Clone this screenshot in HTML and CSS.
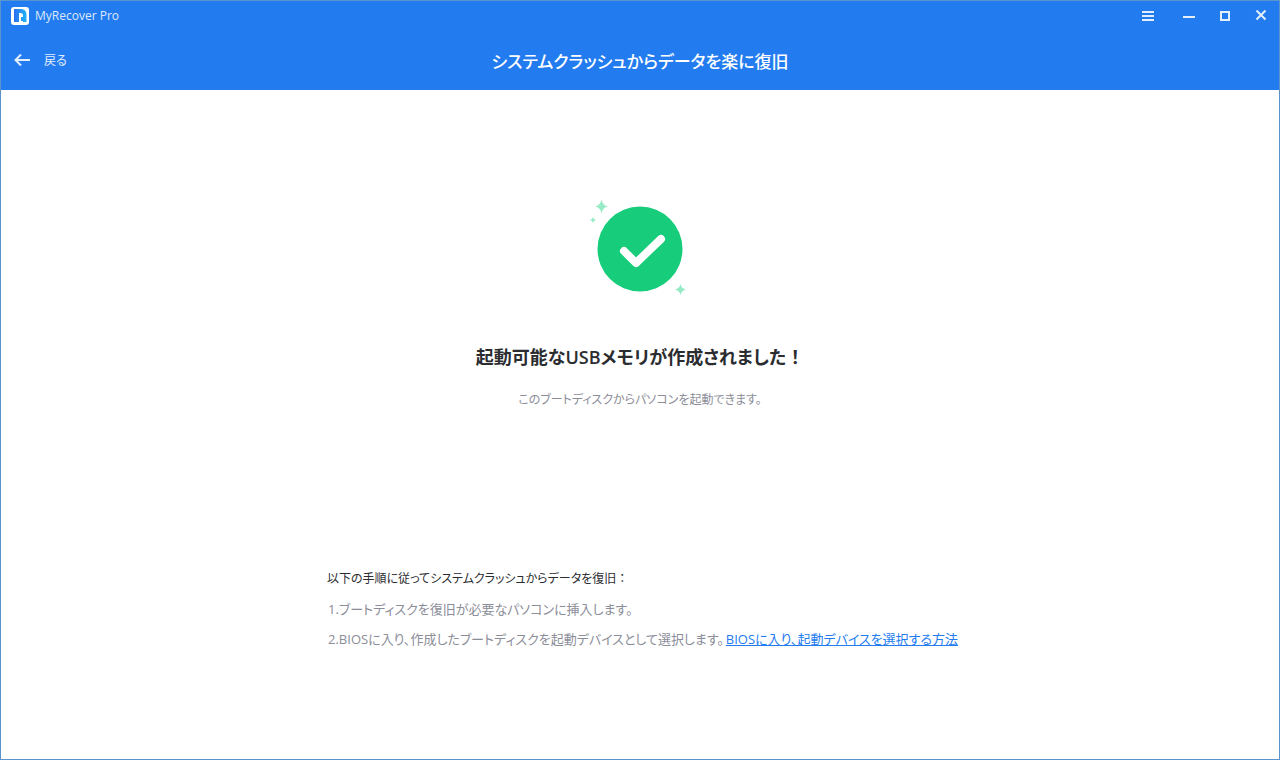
FILE: index.html
```
<!DOCTYPE html>
<html lang="ja">
<head>
    <meta charset="UTF-8">
    <meta name="viewport" content="width=device-width, initial-scale=1.0">
    <title>MyRecover Pro</title>
    <link rel="stylesheet" href="styles.css">
</head>
<body>
    <div class="window">
        <header class="header">
            <div class="titlebar">
                <svg class="logo" width="18" height="18" viewBox="0 0 18 18">
                    <defs>
                        <linearGradient id="logo-fill" x1="0" y1="0" x2="1" y2="0">
                            <stop offset="0" stop-color="#2a6ff0"/>
                            <stop offset="1" stop-color="#1fb4fa"/>
                        </linearGradient>
                    </defs>
                    <rect width="18" height="18" rx="3" fill="#fff"/>
                    <path d="M3 2H10Q15.500 2 15.500 8V15H3z" fill="url(#logo-fill)"/>
                    <path d="M8 16V6H9.500Q12 6 12 8.500V10H10V16z" fill="#fff"/>
                    <path d="M10 14H12V16H10z" fill="#fff"/>
                </svg>
                <span class="app-name">MyRecover Pro</span>
                <div class="controls">
                    <button class="control" aria-label="メニュー">
                        <svg width="12" height="12" viewBox="0 0 12 12"><path d="M0 2h12M0 6h12M0 10h12"/></svg>
                    </button>
                    <button class="control" aria-label="最小化">
                        <svg width="12" height="12" viewBox="0 0 12 12"><path d="M0 7h12"/></svg>
                    </button>
                    <button class="control" aria-label="最大化">
                        <svg width="12" height="12" viewBox="0 0 12 12"><path d="M2 2h8v8H2z"/></svg>
                    </button>
                    <button class="control" aria-label="閉じる">
                        <svg width="12" height="12" viewBox="0 0 12 12"><path d="M1.500 0.500l9 9M10.500 0.500l-9 9"/></svg>
                    </button>
                </div>
            </div>
            <div class="navbar">
                <button class="back">
                    <svg width="16" height="12" viewBox="0 0 16 12"><path d="M7 0.500L1.500 6L7 11.500M1.500 6H16"/></svg>
                    <span>戻る</span>
                </button>
                <h1 class="title">システムクラッシュからデータを楽に復旧</h1>
            </div>
        </header>

        <main class="content">
            <section class="result">
                <svg class="success" width="100" height="100" viewBox="0 0 100 100">
                    <circle cx="50" cy="51" r="42.500" fill="#17cd7b"/>
                    <path d="M34 53L46 65L71 41" fill="none" stroke="#fff" stroke-width="8" stroke-linecap="round" stroke-linejoin="round"/>
                    <g fill="#96ebc6">
                        <path d="M11.500 1.500Q12.500 7.500 18 8.500Q12.500 9.500 11.500 15.500Q10.500 9.500 5 8.500Q10.500 7.500 11.500 1.500z"/>
                        <path d="M3 19Q3.500 21.500 6 22Q3.500 22.500 3 25Q2.500 22.500 0 22Q2.500 21.500 3 19z"/>
                        <path d="M90.500 86Q91.500 90.500 96 91.500Q91.500 92.500 90.500 97Q89.500 92.500 85 91.500Q89.500 90.500 90.500 86z"/>
                    </g>
                </svg>
                <h2 class="result-title">起動可能なUSBメモリが作成されました<span class="full">！</span></h2>
                <p class="result-text">このブートディスクからパソコンを起動できます。</p>
            </section>

            <section class="steps">
                <h3 class="steps-title">以下の手順に従ってシステムクラッシュからデータを復旧<span class="full">：</span></h3>
                <p class="step">1.ブートディスクを復旧が必要なパソコンに挿入します。</p>
                <p class="step">2.BIOSに入り、作成したブートディスクを起動デバイスとして選択します。<a class="link" href="#">BIOSに入り、起動デバイスを選択する方法</a></p>
            </section>
        </main>
    </div>
</body>
</html>
```

FILE: styles.css
```
* {
    box-sizing: border-box;
}

body {
    margin: 0;
    font-family: "Open Sans", "Noto Sans CJK JP", sans-serif;
    font-feature-settings: "palt";
    font-size: 13px;
    color: #2b2c30;
    background-color: #fff;
}

h1, h2, h3, p {
    margin: 0;
}

button {
    padding: 0;
    border: none;
    background: none;
    color: inherit;
    font: inherit;
    font-feature-settings: inherit;
    cursor: pointer;
}

.window {
    min-height: 100vh;
    border: 1px solid #5b93cc;
}

.header {
    background-color: #237cef;
    color: #fff;
}

.header svg {
    display: block;
}

.titlebar {
    display: flex;
    align-items: center;
    height: 29px;
    padding: 0 12px 0 10px;
}

.app-name {
    margin-left: 6px;
    font-size: 12px;
    color: #dce9fc;
}

.controls {
    display: flex;
    gap: 24px;
    margin-left: auto;
}

.control,
.back svg {
    fill: none;
    stroke: #e4effd;
    stroke-width: 2;
}

.control:first-child {
    margin-right: 5px;
}

.navbar {
    display: grid;
    grid-template-columns: 1fr auto 1fr;
    align-items: center;
    height: 60px;
    padding: 0 13px;
}

.back {
    display: flex;
    align-items: center;
    gap: 14px;
    justify-self: start;
    font-size: 12px;
    color: #e4effd;
}

.title {
    font-size: 17px;
    font-weight: 500;
}

/* keeps closing punctuation at full width */
.full {
    font-feature-settings: normal;
}

.result {
    display: flex;
    flex-direction: column;
    align-items: center;
    padding-top: 108px;
    text-align: center;
}

.result-title {
    margin-top: 44px;
    font-size: 18px;
    font-weight: 600;
    line-height: 30px;
}

.result-text {
    margin-top: 17px;
    font-size: 12px;
    line-height: 22px;
    color: #8b8d98;
}

.steps {
    margin-top: 157px;
    margin-left: calc(50% - 313px);
}

.steps-title {
    font-size: 12px;
    font-weight: 400;
    line-height: 22px;
}

.step {
    margin-top: 8px;
    padding-left: 1px;
    line-height: 22px;
    color: #8b8d98;
}

.link {
    margin-left: 2px;
    color: #237cef;
}
```
